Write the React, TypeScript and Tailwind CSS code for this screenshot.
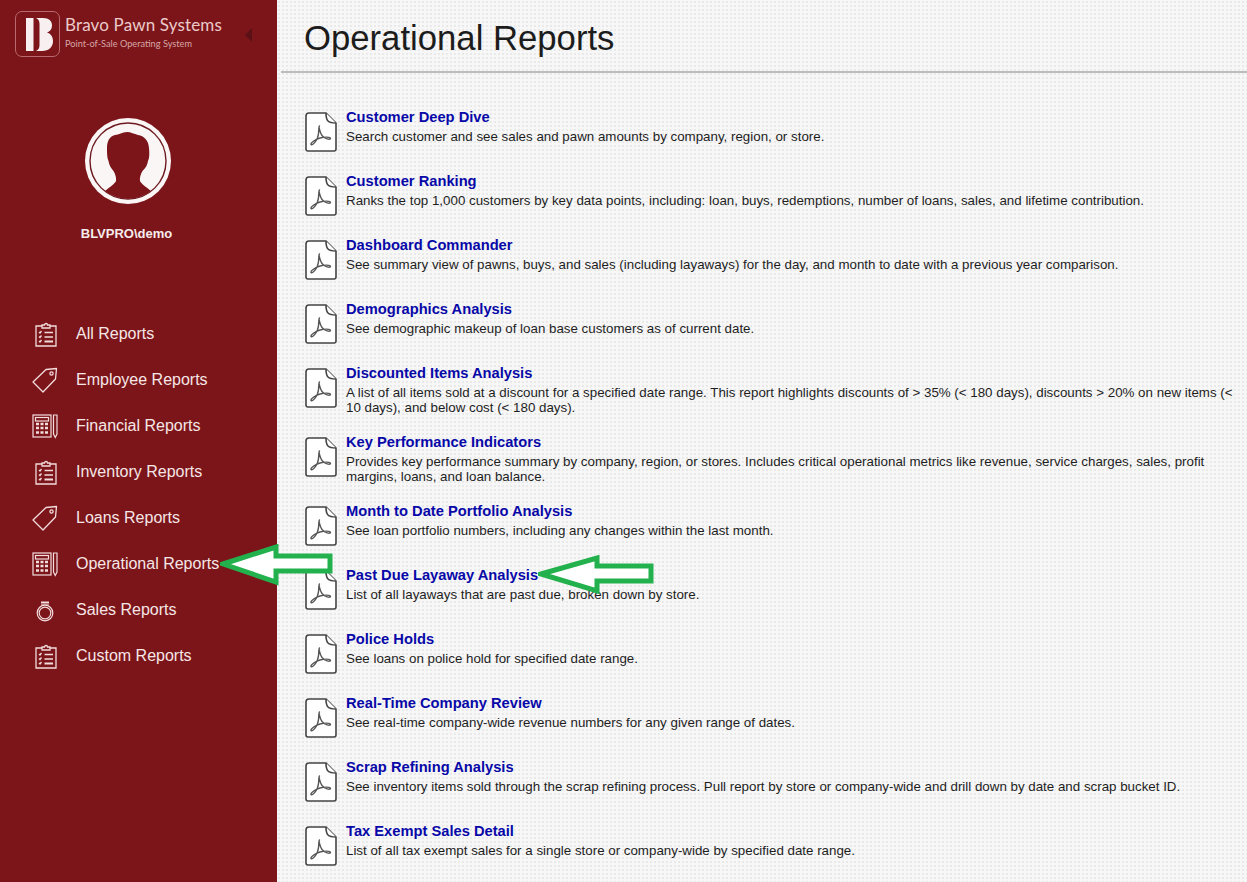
import type { ReactNode } from "react";

const reports = [
  { title: "Customer Deep Dive", desc: "Search customer and see sales and pawn amounts by company, region, or store." },
  { title: "Customer Ranking", desc: "Ranks the top 1,000 customers by key data points, including: loan, buys, redemptions, number of loans, sales, and lifetime contribution." },
  { title: "Dashboard Commander", desc: "See summary view of pawns, buys, and sales (including layaways) for the day, and month to date with a previous year comparison." },
  { title: "Demographics Analysis", desc: "See demographic makeup of loan base customers as of current date." },
  { title: "Discounted Items Analysis", desc: "A list of all items sold at a discount for a specified date range. This report highlights discounts of > 35% (< 180 days), discounts > 20% on new items (< 10 days), and below cost (< 180 days)." },
  { title: "Key Performance Indicators", desc: "Provides key performance summary by company, region, or stores. Includes critical operational metrics like revenue, service charges, sales, profit margins, loans, and loan balance." },
  { title: "Month to Date Portfolio Analysis", desc: "See loan portfolio numbers, including any changes within the last month." },
  { title: "Past Due Layaway Analysis", desc: "List of all layaways that are past due, broken down by store." },
  { title: "Police Holds", desc: "See loans on police hold for specified date range." },
  { title: "Real-Time Company Review", desc: "See real-time company-wide revenue numbers for any given range of dates." },
  { title: "Scrap Refining Analysis", desc: "See inventory items sold through the scrap refining process. Pull report by store or company-wide and drill down by date and scrap bucket ID." },
  { title: "Tax Exempt Sales Detail", desc: "List of all tax exempt sales for a single store or company-wide by specified date range." },
];

function Clipboard() {
  return (
    <svg width="24" height="26" viewBox="0 0 24 26" fill="none" stroke="#f3dcdc" strokeWidth="1.3" className="ml-[2px]">
      <path d="M8 5H2v20h20V5h-6" />
      <path d="M8 7V4h2.500a1.500 1.500 0 0 1 3 0H16v3z" />
      <path d="M5 11l1 1 1.500-2M5 15.500l1 1 1.500-2M5 20l1 1 1.500-2" />
      <path d="M10.500 11.500h8.500M10.500 16h8.500" />
      <path d="M10.500 20.500h8.500" strokeWidth="2" />
    </svg>
  );
}

function Tag() {
  return (
    <svg width="26" height="26" viewBox="0 0 26 26" fill="none" stroke="#f3dcdc" strokeWidth="1.3">
      <path d="M1 15L14 2.500 24.500 1.500 23.500 12 11 25z" strokeLinejoin="round" />
      <circle cx="19.500" cy="6.500" r="1.600" />
    </svg>
  );
}

function Calc() {
  return (
    <svg width="26" height="26" viewBox="0 0 26 26" fill="none" stroke="#f3dcdc" strokeWidth="1.2">
      <rect x="1" y="2" width="18" height="22" />
      <rect x="3.500" y="4.500" width="13" height="3.500" />
      <path d="M4 11h3M8.500 11h3M13 11h3M4 15h3M8.500 15h3M13 15h3M4 19.500h3M8.500 19.500h3M13 19.500h3" strokeWidth="2.400" />
      <path d="M21.500 2h3.500v19l-1.750 3.500L21.500 21z" />
    </svg>
  );
}

function Ring() {
  return (
    <svg width="26" height="26" viewBox="0 0 26 26" fill="none" stroke="#f3dcdc" strokeWidth="1.200">
      <circle cx="13" cy="16" r="7.800" />
      <circle cx="13" cy="16" r="5.800" />
      <path d="M10 8V4M12 8V4M14 8V4M16 8V4M9 5.500h8" strokeWidth="1" />
    </svg>
  );
}

function PdfIcon() {
  return (
    <svg width="32" height="40" viewBox="0 0 32 40" fill="none" className="mt-[3px] ml-[1px] shrink-0">
      <path d="M21 1H4a3 3 0 0 0-3 3v33a2 2 0 0 0 2 2h26a2 2 0 0 0 2-2V11z" fill="#ffffff" stroke="#444444" strokeWidth="1.600" />
      <path d="M21 1c0 8 2 10 10 10" fill="#ffffff" stroke="#444444" strokeWidth="1.600" />
      <path d="M14.500 14c-1.500 1 .5 8-3 14-2 3.500-5 5.500-5.500 4.500-.7-1.500 4-5 9-6.500 3.500-1 10.500-1.500 10.500.5 0 1.500-6 .5-8.500-3-2-3-3.500-9-2.500-9.500z" stroke="#555555" strokeWidth="1.400" strokeLinejoin="round" />
    </svg>
  );
}

function NavItem({ icon, children }: { icon: ReactNode; children: ReactNode }) {
  return (
    <li className="flex h-[46px] items-center">
      <span className="flex w-[76px] justify-center pr-[6px] pl-[20px]">{icon}</span>
      <span className="text-[16px] text-[#f6e6e6]">{children}</span>
    </li>
  );
}

export default function App() {
  return (
    <div className="relative flex h-[882px] w-[1247px] overflow-hidden font-['Liberation_Sans',Arial,sans-serif]">
      <aside className="flex w-[277px] shrink-0 flex-col bg-[#7b151a]">
        <div className="flex h-[70px] items-start pt-[11px] pl-[15px]">
          <div className="flex h-[46px] w-[45px] items-center rounded-[7px] border border-[#b9696c] pl-[10px]">
            <svg width="27" height="33" viewBox="0 0 27 33" fill="#f8f0f0">
              <path d="M0 0h7.500v33H0z" />
              <path d="M10 0h7c6 0 9 3 9 7.500 0 3.500-2 6-5 7 3.500 1 6 4 6 8.500 0 6-4 10-11 10h-6c2.500-1 3.500-3 3.500-6V6c0-3-1-5-3.500-6z" />
            </svg>
          </div>
          <div className="ml-[5px] flex flex-col pt-[1px]">
            <span className="text-[17px] leading-[26px] tracking-[0.15px] text-[#eccaca] font-['Lato',sans-serif]">Bravo Pawn Systems</span>
            <span className="text-[9.200px] leading-[12px] text-[#d9a5a6] font-['Lato',sans-serif]">Point-of-Sale Operating System</span>
          </div>
          <span className="mt-[17px] ml-[23px] h-0 w-0 border-y-[7px] border-r-[7px] border-y-transparent border-r-[#5a1014]" />
        </div>
        <div className="mt-[43px] flex justify-center pr-[21px]">
          <svg width="96" height="96" viewBox="0 0 96 96">
            <circle cx="48" cy="48" r="43" fill="#fbf6f6" />
            <circle cx="48" cy="48" r="38" fill="#fbf6f6" stroke="#6d1a20" strokeWidth="1.400" />
            <path d="M47 19c-5 .5-8 2.500-12 3-6 1.500-8 7-8 13 0 5 0 10 1.500 13 .5 4 2.500 7 5 10 2 3.500 3 7 2.500 10-1 2.500-6 6-11 10A38 38 0 0 0 71 78c-5-4-10-7.500-11-10-.5-3 .5-6.500 2.500-10 3-3 5-6 5.500-10 1.500-3 1.500-8 1-13-.5-8-5-12-11-13-4-1-7-3-11-3z" fill="#7b151a" />
          </svg>
        </div>
        <p className="mt-[17px] pr-[24px] text-center text-[13px] leading-[16px] font-bold text-[#f6ecec]">BLVPRO\demo</p>
        <ul className="mt-[69px]">
          <NavItem icon={<Clipboard />}>All Reports</NavItem>
          <NavItem icon={<Tag />}>Employee Reports</NavItem>
          <NavItem icon={<Calc />}>Financial Reports</NavItem>
          <NavItem icon={<Clipboard />}>Inventory Reports</NavItem>
          <NavItem icon={<Tag />}>Loans Reports</NavItem>
          <NavItem icon={<Calc />}>Operational Reports</NavItem>
          <NavItem icon={<Ring />}>Sales Reports</NavItem>
          <NavItem icon={<Clipboard />}>Custom Reports</NavItem>
        </ul>
      </aside>
      <main className="min-w-0 flex-1 bg-[#f7f7f7] bg-[radial-gradient(#e9e9e9_1px,transparent_1px)] bg-[length:4px_4px]">
        <header className="ml-[4px] h-[73px] border-b-2 border-[#bdbdbd] pt-[16px] pl-[23px]">
          <h1 className="text-[34.700px] leading-[44px] text-[#1c1c1c]">Operational Reports</h1>
        </header>
        <div className="pt-[36px] pl-[27px]">
          {reports.map((r) => (
            <div key={r.title} className="mb-[19px] flex min-h-[45px] items-start last:mb-0">
              <PdfIcon />
              <div className="ml-[9px] pr-[2px]">
                <h2 className="text-[14.700px] leading-[16px] font-bold text-[#0808a8]">{r.title}</h2>
                <p className="mt-[4px] text-[13.330px] leading-[15px] text-[#1e1e1e]">{r.desc}</p>
              </div>
            </div>
          ))}
        </div>
      </main>
      {/* green callout arrows drawn over the page */}
      <svg width="116" height="42" viewBox="0 0 116 42" className="absolute top-[544px] left-[220px]">
        <path d="M3 20L56 3V12H110V27H56V38z" fill="#ffffff" stroke="#22b14c" strokeWidth="5" />
      </svg>
      <svg width="118" height="40" viewBox="0 0 118 40" className="absolute top-[555px] left-[538px]">
        <path d="M3 19L59 3V11H113V26H59V36z" fill="#ffffff" stroke="#22b14c" strokeWidth="5" />
      </svg>
    </div>
  );
}
